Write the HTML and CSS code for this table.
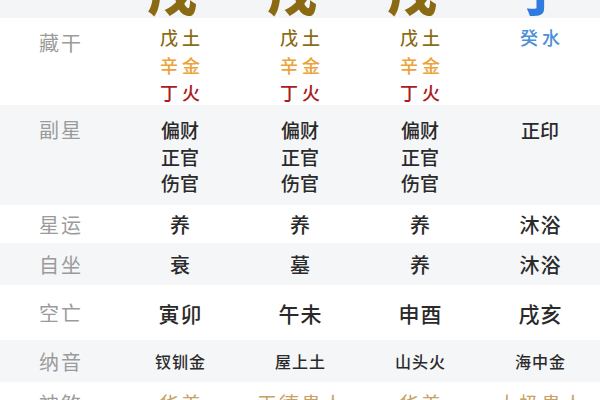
FILE: index.html
```html
<!DOCTYPE html>
<html lang="zh-CN">
<head>
<meta charset="utf-8">
<title>八字排盘</title>
<link rel="stylesheet" href="styles.css">
</head>
<body>
<div class="table">
  <div class="row head">
    <div class="cell"></div>
    <div class="cell"><span class="big earth">戌</span></div>
    <div class="cell"><span class="big earth">戌</span></div>
    <div class="cell"><span class="big earth">戌</span></div>
    <div class="cell"><span class="big water">子</span></div>
  </div>

  <div class="row white hidden-stems">
    <div class="cell label">藏干</div>
    <div class="cell stack">
      <div class="c-earth">戊土</div>
      <div class="c-metal">辛金</div>
      <div class="c-fire">丁火</div>
    </div>
    <div class="cell stack">
      <div class="c-earth">戊土</div>
      <div class="c-metal">辛金</div>
      <div class="c-fire">丁火</div>
    </div>
    <div class="cell stack">
      <div class="c-earth">戊土</div>
      <div class="c-metal">辛金</div>
      <div class="c-fire">丁火</div>
    </div>
    <div class="cell stack">
      <div class="c-water">癸水</div>
    </div>
  </div>

  <div class="row gray sub-stars">
    <div class="cell label">副星</div>
    <div class="cell stack">
      <div>偏财</div>
      <div>正官</div>
      <div>伤官</div>
    </div>
    <div class="cell stack">
      <div>偏财</div>
      <div>正官</div>
      <div>伤官</div>
    </div>
    <div class="cell stack">
      <div>偏财</div>
      <div>正官</div>
      <div>伤官</div>
    </div>
    <div class="cell stack">
      <div>正印</div>
    </div>
  </div>

  <div class="row white single r-xingyun">
    <div class="cell label">星运</div>
    <div class="cell val">养</div>
    <div class="cell val">养</div>
    <div class="cell val">养</div>
    <div class="cell val">沐浴</div>
  </div>

  <div class="row gray single r-zizuo">
    <div class="cell label">自坐</div>
    <div class="cell val">衰</div>
    <div class="cell val">墓</div>
    <div class="cell val">养</div>
    <div class="cell val">沐浴</div>
  </div>

  <div class="row white single r-kongwang">
    <div class="cell label">空亡</div>
    <div class="cell val big-val">寅卯</div>
    <div class="cell val big-val">午未</div>
    <div class="cell val big-val">申酉</div>
    <div class="cell val big-val">戌亥</div>
  </div>

  <div class="row gray single r-nayin">
    <div class="cell label">纳音</div>
    <div class="cell val small-val">钗钏金</div>
    <div class="cell val small-val">屋上土</div>
    <div class="cell val small-val">山头火</div>
    <div class="cell val small-val">海中金</div>
  </div>

  <div class="row white single r-shensha">
    <div class="cell label">神煞</div>
    <div class="cell val gold-val">华盖</div>
    <div class="cell val gold-val">天德贵人</div>
    <div class="cell val gold-val">华盖</div>
    <div class="cell val gold-val">太极贵人</div>
  </div>
</div>
</body>
</html>
```

FILE: styles.css
```css
* { box-sizing: border-box; }

html, body {
  margin: 0;
  padding: 0;
  background: #ffffff;
  font-family: "Noto Sans CJK SC", "Noto Sans", sans-serif;
}

body {
  width: 600px;
  height: 400px;
  overflow: hidden;
}

.table {
  display: flex;
  flex-direction: column;
}

.row {
  display: grid;
  grid-template-columns: repeat(5, 120px);
}

.white { background: #ffffff; }
.gray { background: #f5f6f8; }

.cell {
  text-align: center;
}

/* header with the big, cut-off earthly branches */
.head {
  height: 18px;
  overflow: hidden;
  background: #f4f5f7;
}

.head .cell {
  display: flex;
  justify-content: center;
  align-items: flex-end;
  overflow: hidden;
}

.big {
  font-size: 50px;
  font-weight: 900;
  line-height: 1;
  margin-bottom: 4px;
}

.big.earth { color: #8a6a12; margin-right: 16px; }
.big.water { color: #2f7be0; }

/* labels */
.label {
  color: #9b9b9b;
  font-size: 20px;
  letter-spacing: 2px;
  padding-left: 2px;
  line-height: 27px;
}

/* stacked rows */
.hidden-stems { height: 87px; }
.hidden-stems .stack {
  padding-top: 6px;
  font-size: 18px;
  line-height: 27.5px;
  letter-spacing: 4px;
  padding-left: 4px;
  font-weight: 500;
}
.hidden-stems .label { padding-top: 11px; }

.c-earth { color: #8b6c17; }
.c-metal { color: #eba238; }
.c-fire { color: #a81d1f; }
.c-water { color: #4b8fd9; }

.sub-stars { height: 100px; }
.sub-stars .stack {
  padding-top: 12px;
  font-size: 19px;
  line-height: 26.5px;
  color: #2a2a2a;
  font-weight: 500;
}
.sub-stars .label { padding-top: 12px; line-height: 26.5px; }

/* single line rows */
.single .cell {
  display: flex;
  align-items: center;
  justify-content: center;
}

.r-xingyun { height: 38px; }
.r-zizuo { height: 42px; }
.r-kongwang { height: 55px; }
.r-nayin { height: 42px; }
.r-shensha { height: 42px; }

.val {
  color: #2a2a2a;
  font-size: 20px;
  font-weight: 500;
  letter-spacing: 1px;
  padding-left: 1px;
}

.big-val {
  font-size: 21px;
  letter-spacing: 1px;
}

.small-val {
  font-size: 16px;
  letter-spacing: 1px;
}

.gold-val {
  color: #c9a166;
  font-weight: 400;
  font-size: 20px;
  letter-spacing: 2px;
  padding-left: 2px;
}
```
